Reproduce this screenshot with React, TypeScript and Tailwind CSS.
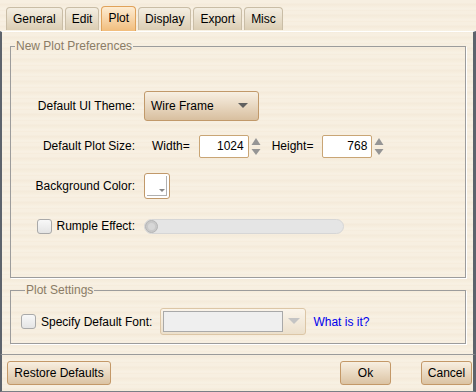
import React from 'react';

const wood =
  'bg-[#f6ecdb] bg-[repeating-linear-gradient(180deg,#f7efe1_0px,#f7efe1_3px,#f4eada_4px,#f6eddd_6px,#f8f1e4_9px,#f5ebdb_11px)]';

function Tab({ label, active }: { label: string; active?: boolean }) {
  if (active)
    return (
      <div className="h-[25px] px-[6px] pb-[3px] flex items-center rounded-t-[4px] border border-b-0 border-[#e0a25a] bg-linear-to-b from-[#fdecd2] to-[#f1bd7c]">
        {label}
      </div>
    );
  return (
    <div className="h-[23px] mb-[1px] px-[6px] flex items-center rounded-t-[4px] border border-b-0 border-[#c9bda6] bg-linear-to-b from-[#f4eee2] to-[#dbcdb3]">
      {label}
    </div>
  );
}

function Spinner() {
  return (
    <svg width="10" height="23" viewBox="0 0 10 23" className="shrink-0">
      <polygon points="0.5,10 5,3 9.5,10" fill="#959595" />
      <polygon points="0.5,14 5,20 9.5,14" fill="#959595" />
    </svg>
  );
}

function NumField({ value }: { value: string }) {
  return (
    <div className="w-[50px] h-[23px] bg-white border border-[#c9a575] rounded-[2px] flex items-center justify-end pr-[4px]">
      {value}
    </div>
  );
}

function CheckBox() {
  return <div className="w-[15px] h-[15px] rounded-[3px] border border-[#a9a9a9] bg-linear-to-b from-[#f8f8f8] to-[#e4e4e4] shrink-0" />;
}

function Btn({ label, w }: { label: string; w: string }) {
  return (
    <button className={`${w} h-[24px] rounded-[3px] border border-[#c39868] bg-linear-to-b from-[#f8efe1] to-[#dbc3a3] text-black`}>
      {label}
    </button>
  );
}

export default function App() {
  return (
    <div
      className={`w-[476px] h-[392px] ${wood} text-[12px] text-black flex flex-col`}
      style={{ fontFamily: '"Liberation Sans", Arial, sans-serif' }}
    >
      {/* tabs */}
      <div className="h-[31px] flex items-end gap-[2px] pl-[6px]">
        <Tab label="General" />
        <Tab label="Edit" />
        <Tab label="Plot" active />
        <Tab label="Display" />
        <Tab label="Export" />
        <Tab label="Misc" />
      </div>

      {/* panel */}
      <div className="border-t border-t-white border-l-2 border-l-[#5d636c] border-r-[3px] border-r-[#5d636c] border-b border-b-[#9a9a9a] pl-[8px] pr-[7px] pt-[7px] pb-[10px] flex flex-col gap-[5px]">
        <fieldset className="border border-[#9c9c9c] shadow-[1px_1px_0_#fff] pt-[37px] pb-[36px]">
          <legend className="ml-[4px] px-[1px] leading-[15px] text-[#8a7c66]">New Plot Preferences</legend>
          <div className="grid grid-cols-[124px_1fr] gap-x-[9px] gap-y-[10px]">
            <div className="h-[30px] flex items-center justify-end">Default UI Theme:</div>
            <div className="h-[30px] flex items-center">
              <div className="w-[115px] h-[30px] rounded-[3px] border border-[#c1996a] bg-linear-to-b from-[#f8f0e3] to-[#d8bf9f] flex items-center justify-between pl-[6px] pr-[10px]">
                <span>Wire Frame</span>
                <svg width="10" height="6" viewBox="0 0 10 6">
                  <polygon points="0,0 10,0 5,5" fill="#606060" />
                </svg>
              </div>
            </div>

            <div className="h-[30px] flex items-center justify-end">Default Plot Size:</div>
            <div className="h-[30px] flex items-center pl-[8px]">
              <span className="mr-[9px]">Width=</span>
              <NumField value="1024" />
              <div className="ml-[2px] mr-[11px]">
                <Spinner />
              </div>
              <span className="mr-[9px]">Height=</span>
              <NumField value="768" />
              <div className="ml-[2px]">
                <Spinner />
              </div>
            </div>

            <div className="h-[30px] flex items-center justify-end">Background Color:</div>
            <div className="h-[30px] flex items-center">
              <div className="w-[26px] h-[26px] rounded-[3px] border border-[#c1996a] bg-white p-[2px]">
                <div className="w-full h-full border-r border-b border-[#b0b0b0] flex items-end justify-end">
                  <svg width="6" height="4" viewBox="0 0 6 4" className="mb-[2px] mr-[1px]">
                    <polygon points="0,0 6,0 3,3" fill="#888" />
                  </svg>
                </div>
              </div>
            </div>

            <div className="h-[30px] flex items-center justify-end gap-[5px]">
              <CheckBox />
              <span>Rumple Effect:</span>
            </div>
            <div className="h-[30px] flex items-center">
              <div className="w-[200px] h-[15px] rounded-full bg-[#e5e5e5] border border-[#d6d6d6] flex items-center">
                <div className="w-[13px] h-[13px] rounded-full bg-[#c9c9c9] border border-[#b5b5b5] flex items-center justify-center">
                  <div className="w-[7px] h-[7px] rounded-full bg-[#d7d7d7]" />
                </div>
              </div>
            </div>
          </div>
        </fieldset>

        <fieldset className="border border-[#9c9c9c] shadow-[1px_1px_0_#fff] pt-[10px] pb-[8px] pl-[10px]">
          <legend className="ml-[4px] px-[1px] leading-[15px] text-[#8a7c66]">Plot Settings</legend>
          <div className="h-[27px] flex items-center">
            <CheckBox />
            <span className="ml-[5px]">Specify Default Font:</span>
            <div className="ml-[8px] w-[146px] h-[27px] rounded-[3px] border border-[#dcc6a6] bg-linear-to-b from-[#faf4ea] to-[#ece0cc] flex items-center pl-[2px]">
              <div className="w-[120px] h-[21px] bg-[#efefef] border border-[#a9a9a9]" />
              <svg width="12" height="7" viewBox="0 0 12 7" className="ml-[5px]">
                <polygon points="0,0 12,0 6,6" fill="#c4c4c4" />
              </svg>
            </div>
            <span className="ml-[7px] text-[#0000ee]">What is it?</span>
          </div>
        </fieldset>
      </div>

      {/* buttons */}
      <div className="flex-1 border-l-2 border-l-[#5d636c] border-r-[3px] border-r-[#5d636c] border-b border-b-[#7a7f86] flex items-center pl-[5px] pr-[1px]">
        <Btn label="Restore Defaults" w="w-[104px]" />
        <div className="flex-1" />
        <Btn label="Ok" w="w-[51px]" />
        <div className="w-[30px]" />
        <Btn label="Cancel" w="w-[51px]" />
      </div>
    </div>
  );
}
